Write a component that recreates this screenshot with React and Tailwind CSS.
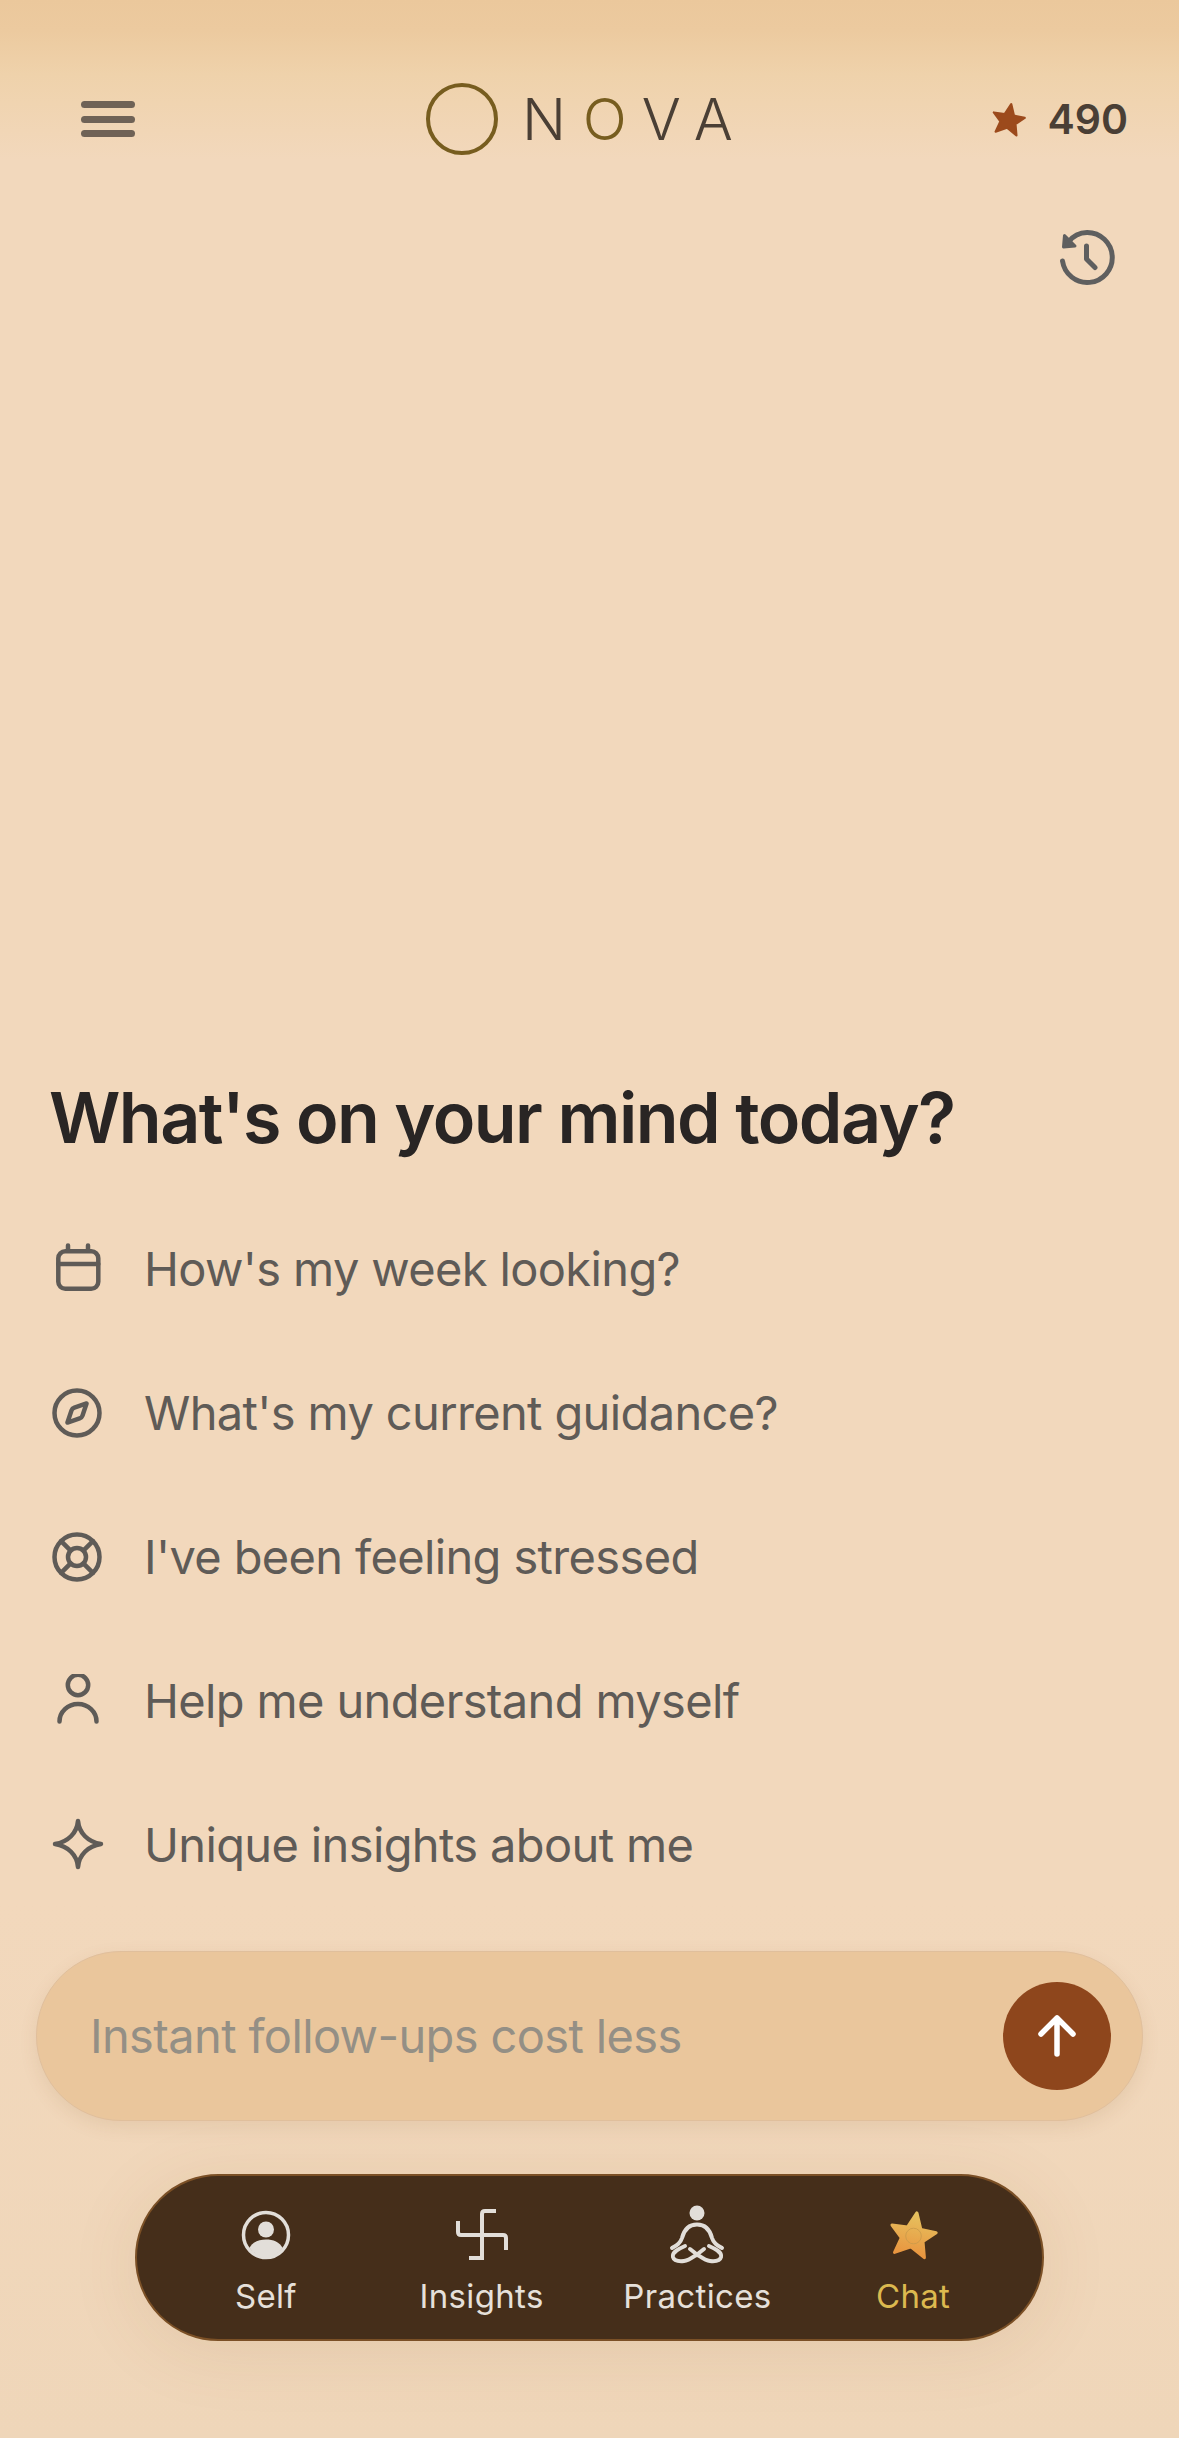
import React from "react";
import { Compass, LifeBuoy } from "lucide-react";

const STAR = "24,2.5 30.5,17.5 45.5,18 34.5,28.5 38.5,43.5 24,35.5 9.5,43.5 13.5,28.5 2.5,18 17.5,17.5";

function CalendarIcon() {
  return (
    <svg width="54" height="54" viewBox="0 0 54 54" fill="none" stroke="#5f5b57" strokeWidth="4.5" strokeLinecap="round" strokeLinejoin="round">
      <rect x="8.3" y="9.3" width="40" height="37.5" rx="7" />
      <path d="M8.3 22h40M18 3.5v5M38 3.5v5" />
    </svg>
  );
}

function PersonIcon() {
  return (
    <svg width="54" height="54" viewBox="0 0 54 54" fill="none" stroke="#5f5b57" strokeWidth="4.5" strokeLinecap="round">
      <circle cx="28" cy="11" r="10.2" />
      <path d="M9.5 47.5A18.5 17.5 0 0 1 46.5 47.5" />
    </svg>
  );
}

function SparkleIcon() {
  return (
    <svg width="54" height="54" viewBox="0 0 54 54" fill="none" stroke="#5f5b57" strokeWidth="4.5" strokeLinecap="round" strokeLinejoin="round">
      <path d="M28 3C29 15 38 24 51 26C38 28 29 37 28 49C27 37 18 28 5 26C18 24 27 15 28 3Z" />
    </svg>
  );
}

function HistoryIcon() {
  return (
    <svg width="58" height="58" viewBox="0 0 58 58" fill="none" stroke="#5f5f5f" strokeWidth="5" strokeLinecap="round" strokeLinejoin="round">
      <path d="M4.5 32A25 25 0 1 0 29 3.5C21 3.5 15 7 10.5 13" />
      <path d="M6.5 6.5L5.5 18L17 17Z" fill="#5f5f5f" stroke="#5f5f5f" strokeWidth="3" />
      <path d="M28.5 17V30L37 38.5" />
    </svg>
  );
}

function SelfIcon() {
  return (
    <svg width="50" height="50" viewBox="0 0 50 50" fill="none">
      <circle cx="25" cy="25" r="22.5" stroke="#e2ded9" strokeWidth="3.5" />
      <circle cx="25" cy="19.5" r="8" fill="#e2ded9" />
      <path d="M8.5 38C11 32 18 29.5 25 29.5C32 29.5 39 32 41.5 38C37 44 31 47 25 47C19 47 13 44 8.5 38Z" fill="#e2ded9" />
    </svg>
  );
}

function WheelIcon() {
  return (
    <svg width="54" height="54" viewBox="0 0 54 54" fill="none" stroke="#e2ded9" strokeWidth="4">
      <path d="M41 3H30Q27 3 27 6V50H14" />
      <path d="M3 13V24Q3 27 6 27H48Q51 27 51 30V42" />
    </svg>
  );
}

function LotusIcon() {
  return (
    <svg width="56" height="60" viewBox="0 0 56 60" fill="none" stroke="#e2ded9" strokeWidth="4" strokeLinecap="round" strokeLinejoin="round">
      <circle cx="28" cy="8" r="7.5" fill="#e2ded9" stroke="none" />
      <path d="M3 43C8 40 11.5 38 13 33C15 25 20 19.5 28 19.5C36 19.5 41 25 43 33C44.5 38 48 40 53 43" />
      <path d="M16 41C9 44 3 47 4 52C5 56 10 56.5 15 56C20 55.5 24 52 28 49.5L35 44" />
      <path d="M40 41C47 44 53 47 52 52C51 56 46 56.5 41 56C36 55.5 32 52 28 49.5L21 44" />
    </svg>
  );
}

function GoldStar() {
  return (
    <svg width="50" height="50" viewBox="0 0 48 48" fill="none">
      <defs>
        <linearGradient id="goldStar" x1="0" y1="0" x2="0" y2="1">
          <stop offset="0" stopColor="#e6c25f" />
          <stop offset="1" stopColor="#e9953f" />
        </linearGradient>
      </defs>
      <g transform="rotate(10 24 24)">
        <polygon points={STAR} fill="url(#goldStar)" stroke="url(#goldStar)" strokeWidth="3" strokeLinejoin="round" />
      </g>
      <circle cx="24.5" cy="25" r="7.5" stroke="#c99a4a" strokeWidth="0.8" />
    </svg>
  );
}

const prompts = [
  [<CalendarIcon />, "How's my week looking?"],
  [<Compass size={54} strokeWidth={2} color="#5f5b57" />, "What's my current guidance?"],
  [<LifeBuoy size={54} strokeWidth={2} color="#5f5b57" />, "I've been feeling stressed"],
  [<PersonIcon />, "Help me understand myself"],
  [<SparkleIcon />, "Unique insights about me"],
];

const tabs = [
  [<SelfIcon />, "Self", "text-[#e6e0da]"],
  [<WheelIcon />, "Insights", "text-[#e6e0da]"],
  [<LotusIcon />, "Practices", "text-[#e6e0da]"],
  [<GoldStar />, "Chat", "text-[#dcb94f]"],
];

export default function App() {
  return (
    <div className="flex h-[2438px] w-[1179px] flex-col overflow-hidden bg-[linear-gradient(180deg,#ebc89c_0px,#ecca9f_30px,#efd2ab_75px,#f2d8bc_160px,#f2d8bc_1900px,#efd6b9_2438px)] font-['Inter',sans-serif]">
      <header className="mt-[83px] flex h-[72px] items-center pl-[81px] pr-[51px]">
        <div className="flex w-[54px] flex-col gap-[7.5px]">
          <span className="h-[7px] rounded-full bg-[#6f6256]" />
          <span className="h-[7px] rounded-full bg-[#6f6256]" />
          <span className="h-[7px] rounded-full bg-[#6f6256]" />
        </div>
        <div className="ml-[291px] flex items-center">
          <span className="h-[72px] w-[72px] rounded-full border-[4.5px] border-[#775d1f]" />
          <span className="ml-[24px] text-[58px] font-[350] leading-none tracking-[0.29em] text-[#4a3f35]">
            N<span className="text-[#775d1f]">O</span>VA
          </span>
        </div>
        <div className="ml-auto flex items-center gap-[21px]">
          <svg width="35" height="35" viewBox="0 0 48 48">
            <g transform="rotate(10 24 24)">
              <polygon points={STAR} fill="#9c4a1c" stroke="#9c4a1c" strokeWidth="3" strokeLinejoin="round" />
            </g>
          </svg>
          <span className="text-[41px] font-semibold leading-none text-[#4a3f35]">490</span>
        </div>
      </header>

      <div className="mt-[74px] flex justify-end pr-[63px]">
        <HistoryIcon />
      </div>

      <main className="mt-auto flex flex-col">
        <h1 className="pl-[49px] text-[70px] font-semibold leading-none tracking-[-0.022em] text-[#292524]">
          What's on your mind today?
        </h1>
        <ul className="mt-[44px] flex flex-col pl-[50px]">
          {prompts.map(([icon, label]) => (
            <li key={label} className="flex h-[144px] items-center gap-[40px] text-[47px] tracking-[-0.0135em] text-[#5f5b57]">
              <span className="flex h-[54px] w-[54px] shrink-0 items-center justify-center">{icon}</span>
              <span>{label}</span>
            </li>
          ))}
        </ul>
      </main>

      <div className="mx-[36px] mt-[34px] flex h-[170px] items-center rounded-full border border-[#e0bf9c] bg-[#eac69c] pl-[53px] pr-[31px] shadow-[0_6px_18px_rgba(130,80,30,0.10)]">
        <span className="text-[47px] tracking-[-0.0135em] text-[#948f85]">Instant follow-ups cost less</span>
        <button className="ml-auto flex h-[108px] w-[108px] items-center justify-center rounded-full bg-[#8e461c]">
          <svg width="44" height="44" viewBox="0 0 44 44" fill="none" stroke="#ffffff" strokeWidth="5.5" strokeLinecap="round" strokeLinejoin="round">
            <path d="M22 40V4M6 20L22 4L38 20" />
          </svg>
        </button>
      </div>

      <nav className="mx-[135px] mb-[97px] mt-[53px] grid h-[167px] grid-cols-4 rounded-[84px] border-2 border-[#7b5026] bg-[#452e1a] px-[21px] shadow-[0_10px_70px_rgba(130,80,30,0.10)]">
        {tabs.map(([icon, label, color]) => (
          <div key={label} className="flex flex-col items-center pt-[29px]">
            <span className="flex h-[60px] items-center justify-center">{icon}</span>
            <span className={`mt-[11px] text-[33px] leading-[40px] tracking-[0.01em] ${color}`}>{label}</span>
          </div>
        ))}
      </nav>
    </div>
  );
}
